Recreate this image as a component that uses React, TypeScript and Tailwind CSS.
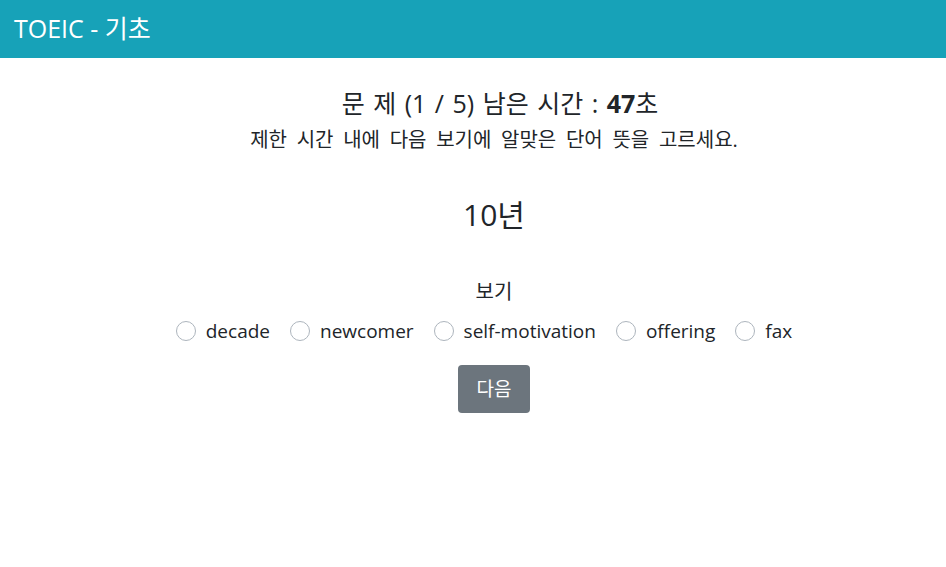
import { useState } from 'react'

const options = ['decade', 'newcomer', 'self-motivation', 'offering', 'fax']

export default function App() {
    const [picked, setPicked] = useState<string | null>(null)

    return (
        <div className='min-h-[567px] bg-white text-[#212529]' style={{ fontFamily: '"Open Sans", "Noto Sans CJK KR", sans-serif' }}>
            <header className='h-[58px] bg-[#17a2b8] flex items-center px-[14px]'>
                <span className='text-white text-[25px]'>TOEIC - 기초</span>
            </header>

            <main className='flex flex-col items-center pt-[28px] pl-[42px]'>
                <h4 className='text-[25px] leading-[34px] font-normal [word-spacing:2px] ml-[12px]'>
                    문 제 (1 / 5) 남은 시간 : <b className='font-bold'>47</b>초
                </h4>
                <p className='text-[20px] leading-[30px] mt-[5px] [word-spacing:4.5px]'>제한 시간 내에 다음 보기에 알맞은 단어 뜻을 고르세요.</p>

                <h2 className='text-[30px] leading-[40px] mt-[40px]'>10년</h2>

                <div className='mt-[43px] text-[20px] leading-[28px]'>보기</div>
                <div className='flex items-center gap-x-[20px] mt-[11px] text-[19px] leading-[28px] -ml-[20px]'>
                    {options.map((o) => (
                        <label key={o} className='flex items-center gap-x-[10px] cursor-pointer'>
                            <span
                                onClick={() => setPicked(o)}
                                className={picked === o
                                    ? 'size-[20px] rounded-full border-[6px] border-[#007bff] bg-white'
                                    : 'size-[20px] rounded-full border border-[#adb5bd] bg-white'}
                            />
                            {o}
                        </label>
                    ))}
                </div>

                <button className='mt-[20px] w-[72px] h-[48px] rounded-[4px] bg-[#6c757d] text-white text-[19px]'>다음</button>
            </main>
        </div>
    )
}
